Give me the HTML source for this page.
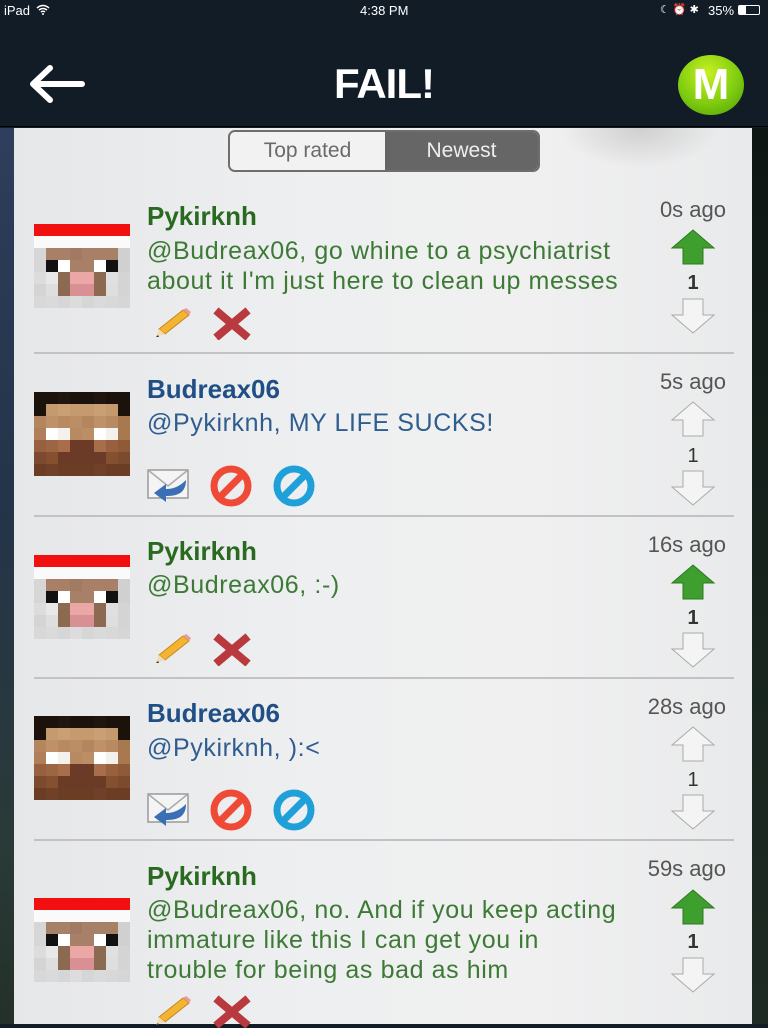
<!DOCTYPE html>
<html><head><meta charset="utf-8"><style>
*{margin:0;padding:0;box-sizing:border-box}
body{width:768px;height:1024px;overflow:hidden;background:#121c27;font-family:"Liberation Sans",sans-serif;position:relative}
.sb{position:absolute;top:0;left:0;width:768px;height:20px;color:#fff;font-size:13px}
.nav{position:absolute;top:20px;left:0;width:768px;height:107px;background:#121c27;border-bottom:1px solid #000}
.side{position:absolute;top:128px;height:896px}
.panel{position:absolute;left:14px;top:128px;width:738px;height:896px;background:linear-gradient(90deg,#e6e7e9,#eeeff0 40%,#f0f0f1 70%,#e9eaeb)}
.a{position:absolute}
.av{position:absolute;width:12px;height:12px}
.name{position:absolute;left:147px;font-size:26px;font-weight:bold;line-height:30px}
.txt{position:absolute;left:147px;font-size:25px;line-height:30px;white-space:nowrap;letter-spacing:0.6px}
.g{color:#2a6a20}.gt{color:#3d7a35}.b{color:#1f4f85}.bt{color:#2f5d90}
.time{position:absolute;right:42px;font-size:22px;color:#555;line-height:26px}
.cnt{position:absolute;left:673px;width:40px;text-align:center;font-size:20px;line-height:24px;color:#333}
.sep{position:absolute;left:34px;width:700px;height:2px;background:#c2c2c4}
.santa{background:#f10f0f;box-shadow:
12px 0 #f10f0f,24px 0 #f10f0f,36px 0 #f10f0f,48px 0 #f10f0f,60px 0 #f10f0f,72px 0 #f10f0f,84px 0 #f10f0f,
0 12px #fafafa,12px 12px #fafafa,24px 12px #fafafa,36px 12px #fafafa,48px 12px #fafafa,60px 12px #fafafa,72px 12px #fafafa,84px 12px #fafafa,
0 24px #d6d6d6,12px 24px #a88068,24px 24px #a88068,36px 24px #a07a62,48px 24px #a88068,60px 24px #a88068,72px 24px #a88068,84px 24px #d0d0d0,
0 36px #d6d6d6,12px 36px #111,24px 36px #fff,36px 36px #a88068,48px 36px #a88068,60px 36px #fff,72px 36px #111,84px 36px #d0d0d0,
0 48px #dcdcdc,12px 48px #e8e8e8,24px 48px #8c6a52,36px 48px #eba6a6,48px 48px #eba6a6,60px 48px #8c6a52,72px 48px #e0e0e0,84px 48px #d4d4d4,
0 60px #d4d4d4,12px 60px #dedede,24px 60px #8c6a52,36px 60px #d99094,48px 60px #d99094,60px 60px #8c6a52,72px 60px #dedede,84px 60px #d4d4d4,
0 72px #d8d8d8,12px 72px #dadada,24px 72px #d6d6d6,36px 72px #dcdcdc,48px 72px #d6d6d6,60px 72px #dadada,72px 72px #d8d8d8,84px 72px #d6d6d6}
.steve{background:#1b120b;box-shadow:
12px 0 #1b120b,24px 0 #20160e,36px 0 #1b120b,48px 0 #1b120b,60px 0 #20160e,72px 0 #1b120b,84px 0 #1b120b,
0 12px #1b120b,12px 12px #c49a6e,24px 12px #c8a074,36px 12px #c49a6e,48px 12px #c49a6e,60px 12px #c8a074,72px 12px #c49a6e,84px 12px #1b120b,
0 24px #b48660,12px 24px #c09068,24px 24px #b88a62,36px 24px #bc8e66,48px 24px #b48660,60px 24px #c09068,72px 24px #b88a62,84px 24px #a8784f,
0 36px #b07e58,12px 36px #fff,24px 36px #f4f0ec,36px 36px #b88a62,48px 36px #bc8e66,60px 36px #fff,72px 36px #f4f0ec,84px 36px #a8784f,
0 48px #98603e,12px 48px #9c6642,24px 48px #a86e4c,36px 48px #6b3b27,48px 48px #6b3b27,60px 48px #a86e4c,72px 48px #98603e,84px 48px #8e5a38,
0 60px #7c4a2e,12px 60px #84502f,24px 60px #6b3b27,36px 60px #6b3b27,48px 60px #6b3b27,60px 60px #6b3b27,72px 60px #84502f,84px 60px #7c4a2e,
0 72px #6a3d24,12px 72px #704128,24px 72px #6a3d24,36px 72px #6a3d24,48px 72px #6a3d24,60px 72px #704128,72px 72px #6a3d24,84px 72px #6a3d24}
</style></head><body>
<div class="side" style="left:0;width:14px;background:linear-gradient(180deg,#2e3e5c,#24344a 40%,#2a3a38 80%,#243028)"></div>
<div class="side" style="left:752px;width:16px;background:linear-gradient(180deg,#0e1614,#18261f 60%,#1e2b24)"></div>
<div class="sb">
<span style="position:absolute;left:4px;top:3px">iPad</span>
<svg style="position:absolute;left:36px;top:4px" width="14" height="11" viewBox="0 0 14 11"><path d="M1 4Q7 -1 13 4M3 6Q7 3 11 6M5 8Q7 6.5 9 8" stroke="#fff" stroke-width="1.5" fill="none"/><circle cx="7" cy="10" r="1" fill="#fff"/></svg>
<span style="position:absolute;left:360px;top:3px">4:38 PM</span>
<span style="position:absolute;left:660px;top:3px;font-size:11px">☾ ⏰ ✱</span>
<span style="position:absolute;left:708px;top:3px">35%</span>
<div style="position:absolute;left:738px;top:5px;width:22px;height:10px;border:1px solid #fff;border-radius:2px"><div style="width:7px;height:8px;background:#fff"></div></div>
</div>
<div class="nav">
<svg style="position:absolute;left:28px;top:44px" width="58" height="40" viewBox="0 0 58 40"><path d="M54 20H6M22 4L5 20L22 36" stroke="#fff" stroke-width="6" stroke-linecap="round" stroke-linejoin="round" fill="none"/></svg>
<div style="position:absolute;left:0;width:768px;top:40px;text-align:center;color:#fff;font-size:42px;font-weight:bold;letter-spacing:-1px">FAIL!</div>
<div style="position:absolute;left:678px;top:35px;width:66px;height:60px;border-radius:50%;background:radial-gradient(circle at 45% 30%,#c8f020,#7fcc10 55%,#4a9a00);color:#fff;font-weight:bold;font-size:44px;text-align:center;line-height:60px">M</div>
</div>
<div class="panel"></div>
<div style="position:absolute;left:560px;top:128px;width:160px;height:40px;background:radial-gradient(ellipse at 50% 0,#cfcfcf,rgba(230,230,230,0) 70%)"></div>
<div style="position:absolute;left:228px;top:130px;width:312px;height:42px;border:2px solid #6e6e6e;border-radius:7px;overflow:hidden;display:flex;font-size:21px">
<div style="width:155px;background:#f2f2f3;color:#6a6a6a;text-align:center;line-height:38px">Top rated</div>
<div style="flex:1;background:#666;color:#eee;text-align:center;line-height:38px">Newest</div>
</div>

<svg width="0" height="0" style="position:absolute"><defs>
<symbol id="up" viewBox="0 0 46 38"><path d="M23 2L44 20H33V36H13V20H2Z"/></symbol>
<symbol id="dn" viewBox="0 0 46 38"><path d="M13 2H33V18H44L23 36L2 18H13Z"/></symbol>
<symbol id="pen" viewBox="0 0 40 34"><path d="M30 4L36 9L12 28L6 23Z" fill="#f2b431" stroke="#c8861a" stroke-width="1"/><path d="M30 4L33 2L38 6L36 9Z" fill="#e99a9a"/><path d="M6 23L12 28L3 31Z" fill="#f3dcb0"/><path d="M3 31L5 29L6 31Z" fill="#333"/></symbol>
<symbol id="x" viewBox="0 0 40 34"><path d="M7 7L33 29M33 7L7 29" stroke="#b83a3f" stroke-width="8" stroke-linecap="square"/></symbol>
<symbol id="env" viewBox="0 0 46 40"><rect x="2" y="4" width="40" height="28" fill="#f4f4f4" stroke="#999" stroke-width="1.5"/><path d="M2 4L22 20L42 4" fill="none" stroke="#aaa" stroke-width="1.5"/><path d="M40 14C40 28 30 30 20 30V36L8 27L20 18V23C28 23 34 20 40 14Z" fill="#3a6fb5"/></symbol>
<symbol id="noR" viewBox="0 0 44 44"><circle cx="22" cy="22" r="17" fill="none" stroke="#ee4a36" stroke-width="7"/><path d="M33 11L11 33" stroke="#ee4a36" stroke-width="7"/></symbol>
<symbol id="noB" viewBox="0 0 44 44"><circle cx="22" cy="22" r="17" fill="none" stroke="#20a0d8" stroke-width="7"/><path d="M33 11L11 33" stroke="#20a0d8" stroke-width="7"/></symbol>
</defs></svg>

<!-- Row 1 -->
<div class="av santa" style="left:34px;top:224px"></div>
<div class="name g" style="top:201px">Pykirknh</div>
<div class="txt gt" style="top:236px">@Budreax06, go whine to a psychiatrist<br>about it I'm just here to clean up messes</div>
<svg class="a" style="left:153px;top:306px" width="40" height="34"><use href="#pen"/></svg>
<svg class="a" style="left:212px;top:306px" width="40" height="34"><use href="#x"/></svg>
<div class="time" style="top:197px">0s ago</div>
<svg class="a" style="left:670px;top:228px;fill:#3e9e2e;stroke:#2d7a20" width="46" height="38"><use href="#up"/></svg>
<div class="cnt" style="top:271px;font-weight:bold">1</div>
<svg class="a" style="left:670px;top:297px;fill:#f4f4f4;stroke:#aaa" width="46" height="38"><use href="#dn"/></svg>
<div class="sep" style="top:352px"></div>

<!-- Row 2 -->
<div class="av steve" style="left:34px;top:392px"></div>
<div class="name b" style="top:374px">Budreax06</div>
<div class="txt bt" style="top:408px">@Pykirknh, MY LIFE SUCKS!</div>
<svg class="a" style="left:146px;top:466px" width="46" height="40"><use href="#env"/></svg>
<svg class="a" style="left:209px;top:464px" width="44" height="44"><use href="#noR"/></svg>
<svg class="a" style="left:272px;top:464px" width="44" height="44"><use href="#noB"/></svg>
<div class="time" style="top:369px">5s ago</div>
<svg class="a" style="left:670px;top:400px;fill:#f4f4f4;stroke:#aaa" width="46" height="38"><use href="#up"/></svg>
<div class="cnt" style="top:444px">1</div>
<svg class="a" style="left:670px;top:469px;fill:#f4f4f4;stroke:#aaa" width="46" height="38"><use href="#dn"/></svg>
<div class="sep" style="top:515px"></div>

<!-- Row 3 -->
<div class="av santa" style="left:34px;top:555px"></div>
<div class="name g" style="top:536px">Pykirknh</div>
<div class="txt gt" style="top:570px">@Budreax06, :-)</div>
<svg class="a" style="left:153px;top:632px" width="40" height="34"><use href="#pen"/></svg>
<svg class="a" style="left:212px;top:632px" width="40" height="34"><use href="#x"/></svg>
<div class="time" style="top:532px">16s ago</div>
<svg class="a" style="left:670px;top:563px;fill:#3e9e2e;stroke:#2d7a20" width="46" height="38"><use href="#up"/></svg>
<div class="cnt" style="top:606px;font-weight:bold">1</div>
<svg class="a" style="left:670px;top:631px;fill:#f4f4f4;stroke:#aaa" width="46" height="38"><use href="#dn"/></svg>
<div class="sep" style="top:677px"></div>

<!-- Row 4 -->
<div class="av steve" style="left:34px;top:716px"></div>
<div class="name b" style="top:698px">Budreax06</div>
<div class="txt bt" style="top:733px">@Pykirknh, ):&lt;</div>
<svg class="a" style="left:146px;top:790px" width="46" height="40"><use href="#env"/></svg>
<svg class="a" style="left:209px;top:788px" width="44" height="44"><use href="#noR"/></svg>
<svg class="a" style="left:272px;top:788px" width="44" height="44"><use href="#noB"/></svg>
<div class="time" style="top:694px">28s ago</div>
<svg class="a" style="left:670px;top:725px;fill:#f4f4f4;stroke:#aaa" width="46" height="38"><use href="#up"/></svg>
<div class="cnt" style="top:768px">1</div>
<svg class="a" style="left:670px;top:793px;fill:#f4f4f4;stroke:#aaa" width="46" height="38"><use href="#dn"/></svg>
<div class="sep" style="top:839px"></div>

<!-- Row 5 -->
<div class="av santa" style="left:34px;top:898px"></div>
<div class="name g" style="top:861px">Pykirknh</div>
<div class="txt gt" style="top:895px">@Budreax06, no. And if you keep acting<br>immature like this I can get you in<br>trouble for being as bad as him</div>
<svg class="a" style="left:153px;top:994px" width="40" height="34"><use href="#pen"/></svg>
<svg class="a" style="left:212px;top:994px" width="40" height="34"><use href="#x"/></svg>
<div class="time" style="top:856px">59s ago</div>
<svg class="a" style="left:670px;top:888px;fill:#3e9e2e;stroke:#2d7a20" width="46" height="38"><use href="#up"/></svg>
<div class="cnt" style="top:930px;font-weight:bold">1</div>
<svg class="a" style="left:670px;top:956px;fill:#f4f4f4;stroke:#aaa" width="46" height="38"><use href="#dn"/></svg>
</body></html>
